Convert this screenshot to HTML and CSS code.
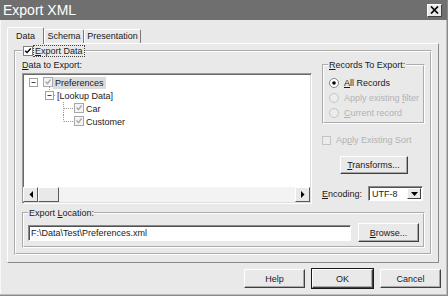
FILE: index.html
```html
<!DOCTYPE html>
<html lang="en">
<head>
    <meta charset="UTF-8">
    <title>Export XML</title>
    <link rel="stylesheet" href="styles.css">
</head>
<body>
<div class="window">
    <div class="titlebar">
        <span class="title">Export XML</span>
        <span class="close">
            <svg width="9" height="8" viewBox="0 0 9 8"><path d="M1 0.5 L8 7.5 M8 0.5 L1 7.5" stroke="#000" stroke-width="1.7" fill="none"/></svg>
        </span>
    </div>

    <div class="client">
        <div class="tabs">
            <div class="tab active">Data</div>
            <div class="tab schema">Schema</div>
            <div class="tab presentation">Presentation</div>
        </div>

        <div class="panel">
            <fieldset class="group export-data">
                <legend>
                    <svg class="check" width="10" height="10" viewBox="0 0 10 10"><rect x="0.5" y="0.5" width="9" height="9" fill="#fff" stroke="#808080"/><path d="M2.2 4.8 L4 6.6 L7.8 2.6" stroke="#000" stroke-width="1.4" fill="none"/></svg>
                    <span class="focus"><u>E</u>xport Data</span>
                </legend>

                <div class="columns">
                    <div class="left">
                        <div class="label"><u>D</u>ata to Export:</div>
                        <div class="tree">
                            <div class="tree-body">
                                <!-- Preferences -->
                                <div class="node">
                                    <svg width="30" height="13" viewBox="0 0 30 13">
                                        <rect x="6.5" y="2.5" width="8" height="8" fill="#fff" stroke="#a0a0a0"/>
                                        <path d="M8.5 6.5 H12.5" stroke="#444"/>
                                        <rect x="20.5" y="1.5" width="9" height="9" fill="#f4f4f4" stroke="#a8a8a8"/>
                                        <path d="M22.5 5.5 L24.5 7.7 L27.5 3.5" stroke="#aaa" stroke-width="1.4" fill="none"/>
                                        <path d="M26.5 11 V13" stroke="#999" stroke-dasharray="1 1"/>
                                    </svg>
                                    <span class="node-text selected">Preferences</span>
                                </div>
                                <!-- Lookup Data -->
                                <div class="node">
                                    <svg width="32" height="13" viewBox="0 0 32 13">
                                        <path d="M26.5 0 V2" stroke="#999" stroke-dasharray="1 1"/>
                                        <rect x="22.5" y="2.5" width="8" height="8" fill="#fff" stroke="#a0a0a0"/>
                                        <path d="M24.5 6.5 H28.5" stroke="#444"/>
                                        <path d="M31 6.5 H32" stroke="#999"/>
                                    </svg>
                                    <span class="node-text">[Lookup Data]</span>
                                </div>
                                <!-- Car -->
                                <div class="node">
                                    <svg width="61" height="13" viewBox="0 0 61 13">
                                        <path d="M40.5 0 V13 M41 6.5 H50" stroke="#999" stroke-dasharray="1 1"/>
                                        <rect x="51.5" y="1.5" width="9" height="9" fill="#f4f4f4" stroke="#a8a8a8"/>
                                        <path d="M53.5 5.5 L55.5 7.7 L58.5 3.5" stroke="#aaa" stroke-width="1.4" fill="none"/>
                                    </svg>
                                    <span class="node-text">Car</span>
                                </div>
                                <!-- Customer -->
                                <div class="node">
                                    <svg width="61" height="13" viewBox="0 0 61 13">
                                        <path d="M40.5 0 V6.5 M41 6.5 H50" stroke="#999" stroke-dasharray="1 1"/>
                                        <rect x="51.5" y="1.5" width="9" height="9" fill="#f4f4f4" stroke="#a8a8a8"/>
                                        <path d="M53.5 5.5 L55.5 7.7 L58.5 3.5" stroke="#aaa" stroke-width="1.4" fill="none"/>
                                    </svg>
                                    <span class="node-text">Customer</span>
                                </div>
                            </div>
                            <div class="hscroll">
                                <span class="sb-btn"><svg width="4" height="7" viewBox="0 0 4 7"><path d="M4 0 V7 L0.5 3.5 Z" fill="#000"/></svg></span>
                                <span class="sb-thumb"></span>
                                <span class="sb-track"></span>
                                <span class="sb-btn"><svg width="4" height="7" viewBox="0 0 4 7"><path d="M0 0 V7 L3.5 3.5 Z" fill="#000"/></svg></span>
                            </div>
                        </div>
                    </div>

                    <div class="right">
                        <fieldset class="group records">
                            <legend><u>R</u>ecords To Export:</legend>
                            <div class="radio">
                                <svg width="10" height="10" viewBox="0 0 10 10"><circle cx="5" cy="5" r="4.5" fill="#fff" stroke="#858585"/><circle cx="5" cy="5" r="1.8" fill="#000"/></svg>
                                <span><u>A</u>ll Records</span>
                            </div>
                            <div class="radio disabled">
                                <svg width="10" height="10" viewBox="0 0 10 10"><circle cx="5" cy="5" r="4.5" fill="#ececec" stroke="#c4c4c4"/></svg>
                                <span>Apply existing <u>f</u>ilter</span>
                            </div>
                            <div class="radio disabled">
                                <svg width="10" height="10" viewBox="0 0 10 10"><circle cx="5" cy="5" r="4.5" fill="#ececec" stroke="#c4c4c4"/></svg>
                                <span><u>C</u>urrent record</span>
                            </div>
                        </fieldset>

                        <div class="sort disabled">
                            <svg width="9" height="9" viewBox="0 0 9 9"><rect x="0.5" y="0.5" width="8" height="8" fill="#ececec" stroke="#c4c4c4"/></svg>
                            <span>Ap<u>p</u>ly Existing Sort</span>
                        </div>

                        <button class="btn transforms"><u>T</u>ransforms...</button>

                        <div class="encoding">
                            <span class="enc-label"><u>E</u>ncoding:</span>
                            <div class="combo">
                                <span class="combo-text">UTF-8</span>
                                <span class="combo-drop"><svg width="7" height="4" viewBox="0 0 7 4"><path d="M0 0 H7 L3.5 4 Z" fill="#000"/></svg></span>
                            </div>
                        </div>
                    </div>
                </div>

                <fieldset class="group location">
                    <legend>Export&nbsp;<u>L</u>ocation:</legend>
                    <div class="location-row">
                        <div class="textbox">F:\Data\Test\Preferences.xml</div>
                        <button class="btn browse"><u>B</u>rowse...</button>
                    </div>
                </fieldset>
            </fieldset>
        </div>

        <div class="buttons">
            <button class="btn">Help</button>
            <button class="btn default">OK</button>
            <button class="btn">Cancel</button>
        </div>
    </div>
</div>
</body>
</html>
```

FILE: styles.css
```css
* {
    box-sizing: border-box;
}

body {
    margin: 0;
    font-family: "Liberation Sans", Arial, sans-serif;
    font-size: 9px;
    color: #1a1a1a;
}

u {
    text-decoration-thickness: 1px;
    text-underline-offset: 1px;
}

.window {
    width: 448px;
    height: 296px;
    background-color: #e9e9e9;
    border-right: 1px solid #8a8a8a;
    border-bottom: 1px solid #8a8a8a;
    box-shadow: inset -1px -1px 0 #bdbdbd, inset 1px 1px 0 #f8f8f8;
    display: flex;
    flex-direction: column;
}

/* title bar */
.titlebar {
    height: 20px;
    background-color: #6f6f6f;
    display: flex;
    align-items: center;
    justify-content: space-between;
    padding: 0 5px 0 3px;
}

.title {
    color: #fff;
    font-size: 14px;
}

.close {
    width: 15px;
    height: 13px;
    background-color: #e9e9e9;
    border: 1px solid;
    border-color: #fff #404040 #404040 #fff;
    display: flex;
    align-items: center;
    justify-content: center;
}

.client {
    flex: 1;
    padding: 7px 8px 0 7px;
    display: flex;
    flex-direction: column;
}

/* tabs */
.tabs {
    display: flex;
    align-items: flex-end;
    height: 17px;
    margin-bottom: -1px;
}

.tab {
    height: 14px;
    margin-bottom: 1px;
    border-left: 1px solid #fff;
    border-top: 1px solid #fff;
    border-right: 1px solid #7a7a7a;
    border-top-left-radius: 2px;
    border-top-right-radius: 2px;
    text-align: center;
    line-height: 12px;
}

.tab.active {
    width: 37px;
    height: 17px;
    margin-bottom: 0;
    padding-top: 2px;
    background-color: #e9e9e9;
    position: relative;
    z-index: 1;
}

.tab.schema {
    width: 40px;
}

.tab.presentation {
    width: 57px;
}

.panel {
    height: 220px;
    border: 1px solid;
    border-color: #fff #8a8a8a #8a8a8a #fff;
    padding: 1px 6px 0 6px;
}

/* group boxes */
.group {
    margin: 0;
    min-width: 0;
    border: 2px groove #fff;
}

.group legend {
    padding: 0;
    line-height: 12px;
    white-space: nowrap;
}

.export-data {
    padding: 0 5px 5px 6px;
}

.export-data legend {
    display: flex;
    align-items: center;
    padding-left: 1px;
}

.export-data legend .focus {
    border: 1px dotted #444;
    padding: 0 1px;
    line-height: 10px;
}

.columns {
    display: flex;
    margin-top: 2px;
}

.left {
    flex: 1;
    display: flex;
    flex-direction: column;
}

.label {
    line-height: 12px;
}

/* tree */
.tree {
    margin-top: 2px;
    height: 131px;
    background-color: #fff;
    border: 1px solid;
    border-color: #9a9a9a #fff #fff #9a9a9a;
    box-shadow: inset 1px 1px 0 #6a6a6a, inset -1px -1px 0 #dcdcdc;
    display: flex;
    flex-direction: column;
}

.tree-body {
    flex: 1;
    padding-top: 2px;
}

.node {
    display: flex;
    align-items: center;
    height: 13px;
}

.node svg {
    display: block;
}

.node-text {
    padding: 0 2px;
    line-height: 12px;
}

.node-text.selected {
    background-color: #dcdcdc;
}

.hscroll {
    height: 15px;
    display: flex;
    margin: 0 1px 1px 0;
}

.sb-btn,
.sb-thumb {
    width: 15px;
    background-color: #e9e9e9;
    border: 1px solid;
    border-color: #fff #5a5a5a #5a5a5a #fff;
    display: flex;
    align-items: center;
    justify-content: center;
}

.sb-thumb {
    width: 21px;
}

.sb-track {
    flex: 1;
    background-color: #f3f3f3;
}

/* right column */
.right {
    width: 103px;
    margin-left: 10px;
    display: flex;
    flex-direction: column;
}

.records {
    padding: 4px 4px 2px 4px;
}

.records legend {
    padding: 0 1px;
}

.radio {
    display: flex;
    align-items: center;
    height: 15px;
    padding-left: 1px;
    white-space: nowrap;
}

.radio svg {
    flex: none;
    margin-right: 5px;
}

.disabled {
    color: #b3b3b3;
}

.sort {
    display: flex;
    align-items: center;
    height: 14px;
    margin-top: 9px;
    white-space: nowrap;
}

.sort svg {
    margin-right: 5px;
}

.btn {
    font-family: inherit;
    font-size: 9px;
    color: #1a1a1a;
    background-color: #e9e9e9;
    border: 1px solid;
    border-color: #fff #404040 #404040 #fff;
    box-shadow: inset -1px -1px 0 #a8a8a8;
    padding: 0;
    width: 61px;
    height: 19px;
}

.btn.default {
    outline: 1px solid #1a1a1a;
    outline-offset: 0;
}

.transforms {
    width: 68px;
    height: 18px;
    align-self: center;
    margin-top: 9px;
}

.encoding {
    display: flex;
    align-items: center;
    margin-top: 12px;
}

.enc-label {
    width: 46px;
}

.combo {
    width: 55px;
    height: 15px;
    background-color: #fff;
    border: 1px solid;
    border-color: #8a8a8a #fff #fff #8a8a8a;
    box-shadow: inset 1px 1px 0 #505050;
    display: flex;
    align-items: center;
    padding: 1px;
}

.combo-text {
    flex: 1;
    padding-left: 2px;
}

.combo-drop {
    width: 14px;
    height: 11px;
    background-color: #e9e9e9;
    border: 1px solid;
    border-color: #fff #404040 #404040 #fff;
    display: flex;
    align-items: center;
    justify-content: center;
}

/* export location */
.location {
    margin-top: 3px;
    padding: 0 4px 4px 4px;
}

.location-row {
    display: flex;
    align-items: center;
    justify-content: space-between;
    margin-top: 4px;
}

.textbox {
    width: 323px;
    height: 16px;
    background-color: #fff;
    border: 1px solid;
    border-color: #8a8a8a #fff #fff #8a8a8a;
    box-shadow: inset 1px 1px 0 #505050;
    padding: 1px 2px;
    line-height: 12px;
}

/* dialog buttons */
.buttons {
    display: flex;
    justify-content: flex-end;
    gap: 7px;
    margin-top: 6px;
    margin-right: -2px;
}
```
